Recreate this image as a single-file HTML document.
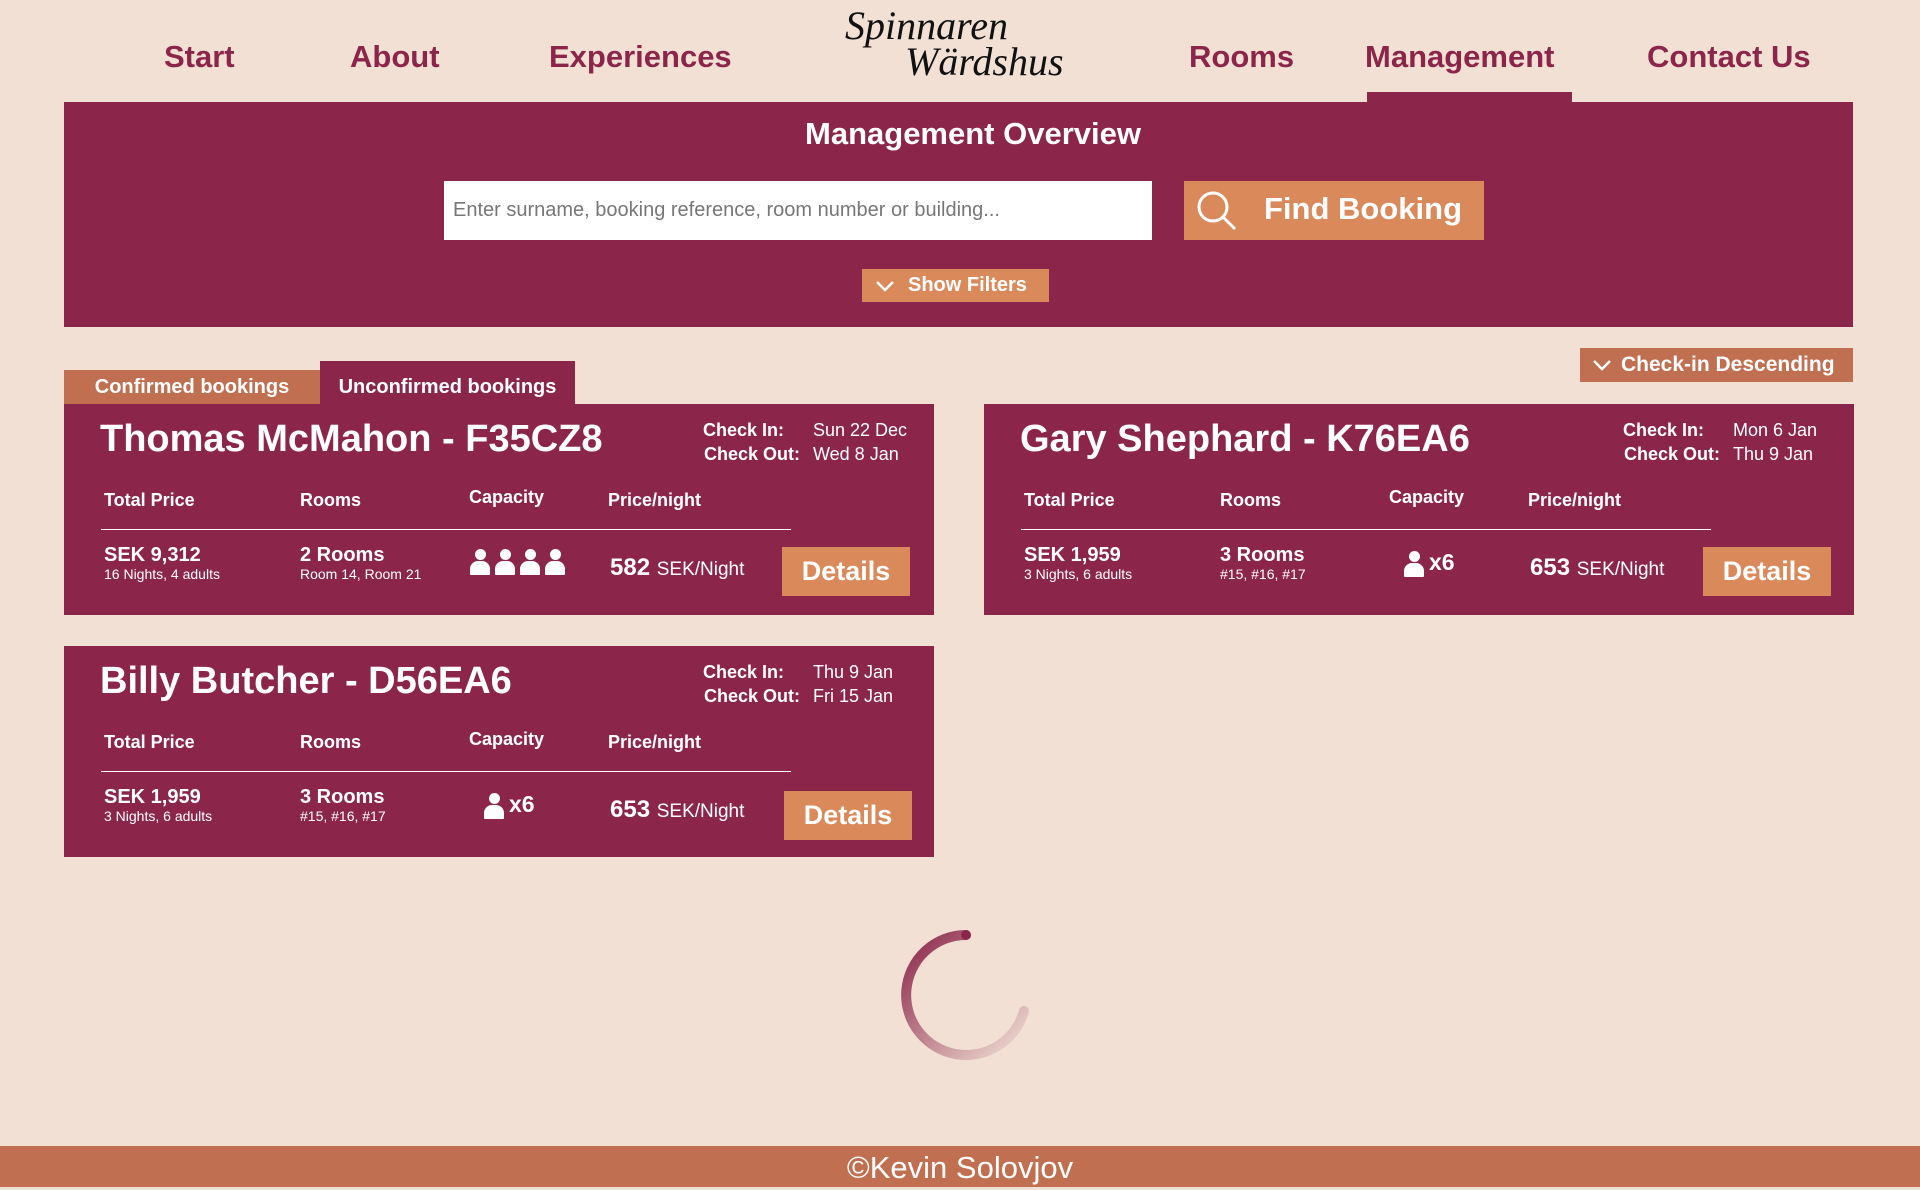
<!DOCTYPE html>
<html><head><meta charset="utf-8"><style>
*{margin:0;padding:0;box-sizing:border-box}
body{width:1920px;height:1187px;background:#f2e0d5;font-family:"Liberation Sans",sans-serif;position:relative;overflow:hidden;color:#fff}
.a{position:absolute;white-space:nowrap}
.nav{color:#8b264a;font-size:31px;font-weight:bold;top:39px}
.mar{background:#8b264a}
.card{position:absolute;background:#8b264a;width:870px;height:211px}
.card .a{color:#fff}
.nm{left:36px;top:14px;font-size:38px;font-weight:bold}
.lb{font-size:18px;font-weight:bold}
.dt{font-size:18px}
.hd{font-size:18px;font-weight:bold;top:86px}
.ln{position:absolute;left:37px;top:125px;width:690px;height:1px;background:#fff}
.v{font-size:20px;font-weight:bold;top:140px}
.s{font-size:14px;top:162px}
.det{position:absolute;background:#d9895a;color:#fff;font-size:27px;font-weight:bold;width:128px;height:49px;line-height:49px;text-align:center}
.pp{display:inline-block;width:20px;height:26px;margin-right:5px;position:relative;vertical-align:middle}
.pp:before{content:"";position:absolute;left:5px;top:0;width:11px;height:11px;border-radius:50%;background:#fff}
.pp:after{content:"";position:absolute;left:0;top:12px;width:20px;height:14px;border-radius:8px 8px 1px 1px;background:#fff}
</style></head><body>
<div class="a nav" style="left:164px">Start</div>
<div class="a nav" style="left:350px">About</div>
<div class="a nav" style="left:549px">Experiences</div>
<div class="a nav" style="left:1189px">Rooms</div>
<div class="a nav" style="left:1365px">Management</div>
<div class="a nav" style="left:1647px">Contact Us</div>
<div class="a" style="left:845px;top:8px;color:#111;font-family:'Liberation Serif',serif;font-style:italic;font-size:40px;line-height:36px">Spinnaren<br><span style="margin-left:60px">Wärdshus</span></div>
<div class="a mar" style="left:1367px;top:92px;width:205px;height:12px"></div>
<div class="a mar" style="left:64px;top:102px;width:1789px;height:225px"></div>
<div class="a" style="left:0;width:1946px;text-align:center;top:116px;font-size:31px;font-weight:bold">Management Overview</div>
<div class="a" style="left:444px;top:181px;width:708px;height:59px;background:#fff;color:#777;font-size:20px;line-height:59px;padding-left:9px">Enter surname, booking reference, room number or building...</div>
<div class="a" style="left:1184px;top:181px;width:300px;height:59px;background:#d9895a"></div>
<svg class="a" style="left:1194px;top:188px" width="46" height="46" viewBox="0 0 46 46"><circle cx="19" cy="19" r="14" fill="none" stroke="#fff" stroke-width="3"/><line x1="29" y1="29" x2="41" y2="41" stroke="#fff" stroke-width="3"/></svg>
<div class="a" style="left:1264px;top:191px;font-size:31px;font-weight:bold">Find Booking</div>
<div class="a" style="left:862px;top:269px;width:187px;height:33px;background:#d9895a"></div>
<svg class="a" style="left:875px;top:279px" width="20" height="14"><polyline points="2,3 10,11 18,3" fill="none" stroke="#fff" stroke-width="2.5"/></svg>
<div class="a" style="left:908px;top:274px;font-size:20px;font-weight:bold">Show Filters</div>
<div class="a" style="left:1580px;top:348px;width:273px;height:34px;background:#c07050"></div>
<svg class="a" style="left:1592px;top:358px" width="20" height="14"><polyline points="2,3 10,11 18,3" fill="none" stroke="#fff" stroke-width="2.5"/></svg>
<div class="a" style="left:1621px;top:353px;font-size:21px;font-weight:bold">Check-in Descending</div>
<div class="a" style="left:64px;top:370px;width:256px;height:34px;background:#c07050;font-size:20px;font-weight:bold;text-align:center;line-height:34px">Confirmed bookings</div>
<div class="a mar" style="left:320px;top:361px;width:255px;height:44px;font-size:20px;font-weight:bold;text-align:center;line-height:52px">Unconfirmed bookings</div>

<div class="card" style="left:64px;top:404px">
<div class="a nm">Thomas McMahon - F35CZ8</div>
<div class="a lb" style="left:639px;top:16px">Check In:</div><div class="a dt" style="left:749px;top:16px">Sun 22 Dec</div>
<div class="a lb" style="left:640px;top:40px">Check Out:</div><div class="a dt" style="left:749px;top:40px">Wed 8 Jan</div>
<div class="a hd" style="left:40px">Total Price</div><div class="a hd" style="left:236px">Rooms</div><div class="a hd" style="left:405px;top:83px">Capacity</div><div class="a hd" style="left:544px">Price/night</div>
<div class="ln"></div>
<div class="a v" style="left:40px">SEK 9,312</div><div class="a s" style="left:40px">16 Nights, 4 adults</div>
<div class="a v" style="left:236px">2 Rooms</div><div class="a s" style="left:236px">Room 14, Room 21</div>
<div class="a" style="left:406px;top:145px"><span class="pp"></span><span class="pp"></span><span class="pp"></span><span class="pp"></span></div>
<div class="a" style="left:546px;top:150px;font-size:24px;font-weight:bold">582 <span style="font-size:19px;font-weight:normal">SEK/Night</span></div>
<div class="det" style="left:718px;top:143px">Details</div>
</div>

<div class="card" style="left:984px;top:404px">
<div class="a nm">Gary Shephard - K76EA6</div>
<div class="a lb" style="left:639px;top:16px">Check In:</div><div class="a dt" style="left:749px;top:16px">Mon 6 Jan</div>
<div class="a lb" style="left:640px;top:40px">Check Out:</div><div class="a dt" style="left:749px;top:40px">Thu 9 Jan</div>
<div class="a hd" style="left:40px">Total Price</div><div class="a hd" style="left:236px">Rooms</div><div class="a hd" style="left:405px;top:83px">Capacity</div><div class="a hd" style="left:544px">Price/night</div>
<div class="ln"></div>
<div class="a v" style="left:40px">SEK 1,959</div><div class="a s" style="left:40px">3 Nights, 6 adults</div>
<div class="a v" style="left:236px">3 Rooms</div><div class="a s" style="left:236px">#15, #16, #17</div>
<div class="a" style="left:420px;top:145px;font-size:23px;font-weight:bold"><span class="pp"></span>x6</div>
<div class="a" style="left:546px;top:150px;font-size:24px;font-weight:bold">653 <span style="font-size:19px;font-weight:normal">SEK/Night</span></div>
<div class="det" style="left:719px;top:143px">Details</div>
</div>

<div class="card" style="left:64px;top:646px">
<div class="a nm">Billy Butcher - D56EA6</div>
<div class="a lb" style="left:639px;top:16px">Check In:</div><div class="a dt" style="left:749px;top:16px">Thu 9 Jan</div>
<div class="a lb" style="left:640px;top:40px">Check Out:</div><div class="a dt" style="left:749px;top:40px">Fri 15 Jan</div>
<div class="a hd" style="left:40px">Total Price</div><div class="a hd" style="left:236px">Rooms</div><div class="a hd" style="left:405px;top:83px">Capacity</div><div class="a hd" style="left:544px">Price/night</div>
<div class="ln"></div>
<div class="a v" style="left:40px">SEK 1,959</div><div class="a s" style="left:40px">3 Nights, 6 adults</div>
<div class="a v" style="left:236px">3 Rooms</div><div class="a s" style="left:236px">#15, #16, #17</div>
<div class="a" style="left:420px;top:145px;font-size:23px;font-weight:bold"><span class="pp"></span>x6</div>
<div class="a" style="left:546px;top:150px;font-size:24px;font-weight:bold">653 <span style="font-size:19px;font-weight:normal">SEK/Night</span></div>
<div class="det" style="left:720px;top:145px">Details</div>
</div>

<svg class="a" style="left:896px;top:925px" width="140" height="140" viewBox="0 0 140 140">
<defs><linearGradient id="g" x1="0" y1="0" x2="1" y2="1"><stop offset="0" stop-color="#8b264a"/><stop offset="1" stop-color="#f2e0d5"/></linearGradient></defs>
<path d="M70 10 A60 60 0 1 0 128 86" fill="none" stroke="url(#g)" stroke-width="10" stroke-linecap="round"/>
<circle cx="70" cy="10" r="5" fill="#8b264a"/>
</svg>
<div class="a" style="left:0;top:1146px;width:1920px;height:41px;background:#c07050;text-align:center;font-size:31px;line-height:44px">©Kevin Solovjov</div>
</body></html>
